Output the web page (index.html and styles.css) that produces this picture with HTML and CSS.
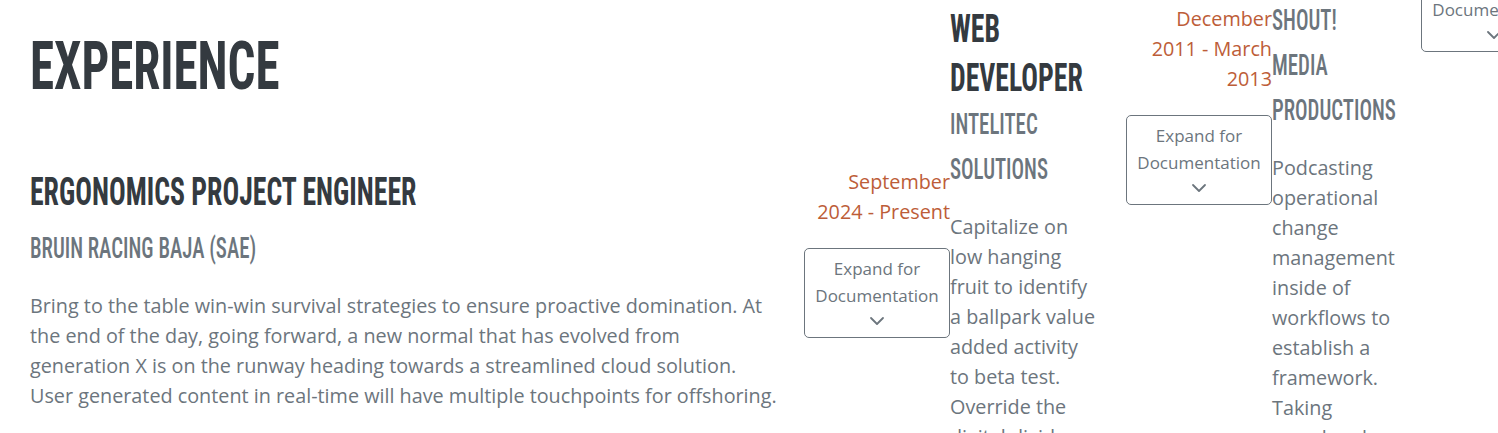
FILE: index.html
```html
<!DOCTYPE html>
<html lang="en">
<head>
<meta charset="utf-8">
<title>Experience</title>
<link rel="stylesheet" href="styles.css">
</head>
<body>
<section class="track">
  <div class="group">
    <h2 class="section-title"><span class="squeeze">Experience</span></h2>
    <article class="item item-1">
      <div class="item-main">
        <h3 class="job"><span class="squeeze">Ergonomics Project Engineer</span></h3>
        <div class="company"><span class="squeeze">Bruin Racing Baja (SAE)</span></div>
        <p class="desc">Bring to the table win-win survival strategies to ensure proactive domination. At the end of the day, going forward, a new normal that has evolved from generation X is on the runway heading towards a streamlined cloud solution. User generated content in real-time will have multiple touchpoints for offshoring.</p>
      </div>
      <div class="item-date">
        <div class="dates">September 2024 - Present</div>
        <button class="expand" type="button">Expand for Documentation<svg class="chev" viewBox="0 0 16 14" width="16" height="14"><polyline points="2,4 8,10 14,4"/></svg></button>
      </div>
    </article>
  </div>

  <article class="item item-2">
    <div class="item-main">
      <h3 class="job"><span class="squeeze">Web Developer</span></h3>
      <div class="company"><span class="squeeze">Intelitec Solutions</span></div>
      <p class="desc">Capitalize on low hanging fruit to identify a ballpark value added activity to beta test. Override the digital divide with additional clickthroughs from DevOps. Nanotechnology immersion along the information highway will close the loop on focusing solely on the bottom line.</p>
    </div>
    <div class="item-date">
      <div class="dates">December 2011 - March 2013</div>
      <button class="expand" type="button">Expand for Documentation<svg class="chev" viewBox="0 0 16 14" width="16" height="14"><polyline points="2,4 8,10 14,4"/></svg></button>
    </div>
  </article>

  <article class="item item-3">
    <div class="item-main">
      <h3 class="job"><span class="squeeze">Junior Web Designer</span></h3>
      <div class="company"><span class="squeeze">Shout! Media Productions</span></div>
      <p class="desc">Podcasting operational change management inside of workflows to establish a framework. Taking seamless key performance indicators offline to maximise the long tail. Keeping your eye on the ball while performing a deep dive on the start-up mentality to derive convergence on cross-platform integration.</p>
    </div>
    <div class="item-date">
      <div class="dates">July 2010 - December 2011</div>
      <button class="expand" type="button">Expand for Documentation<svg class="chev" viewBox="0 0 16 14" width="16" height="14"><polyline points="2,4 8,10 14,4"/></svg></button>
    </div>
  </article>
</section>
</body>
</html>
```
FILE: styles.css
```css
html, body {
  margin: 0;
  padding: 0;
  background: #fff;
  overflow: hidden;
}
body {
  width: 1498px;
  height: 433px;
  font-family: "Open Sans", "Noto Sans", sans-serif;
  font-size: 19.8px;
  line-height: 30px;
  color: #6c757d;
}

.track {
  display: flex;
  align-items: flex-start;
  padding-left: 30px;
}

.group {
  display: flex;
  flex-direction: column;
  flex: none;
}

.squeeze {
  --sx: 0.72;
  display: block;
  width: calc(100% / var(--sx));
  transform: scaleX(var(--sx));
  transform-origin: 0 0;
}

.section-title {
  margin: 33px 0 67px;
  font-family: "Roboto", sans-serif;
  font-stretch: 75%;
  font-weight: 700;
  font-size: 66.8px;
  line-height: 66.8px;
  text-transform: uppercase;
  color: #343a40;
}
.section-title .squeeze { --sx: 0.733; }

.item {
  display: flex;
  align-items: flex-start;
  flex: none;
}

.item-main {
  flex: none;
}
.item-1 .item-main { width: 751px; margin-right: 23px; }
.item-2 .item-main { width: 147px; margin-right: 29px; }
.item-3 .item-main { width: 125px; margin-right: 24px; }

.item-2 { margin-top: 4px; }
.item-3 { margin-top: -149px; }

.job {
  margin: 0;
  font-family: "Roboto", sans-serif;
  font-stretch: 75%;
  font-weight: 700;
  font-size: 38.7px;
  line-height: 49px;
  text-transform: uppercase;
  color: #343a40;
}
.job .squeeze { --sx: 0.717; }
.item-1 .job { margin-bottom: 10px; }

.company {
  margin: 0 0 20px;
  font-family: "Roboto", sans-serif;
  font-stretch: 75%;
  font-weight: 500;
  font-size: 29.5px;
  line-height: 45px;
  text-transform: uppercase;
  color: #6c757d;
}
.company .squeeze { --sx: 0.707; }

.desc {
  margin: 0;
}

.item-date {
  flex: none;
  width: 146px;
  text-align: right;
}

.dates {
  color: #bd5d38;
}

.expand {
  display: block;
  width: 100%;
  margin-top: 21px;
  padding: 6px 8px 9px;
  border: 1px solid #6c757d;
  border-radius: 5px;
  background: #fff;
  font-family: "Open Sans", "Noto Sans", sans-serif;
  font-size: 17px;
  line-height: 27px;
  color: #6c757d;
  text-align: center;
}

.chev {
  display: block;
  margin: 5px auto 0;
  fill: none;
  stroke: #6c757d;
  stroke-width: 1.8;
  stroke-linecap: round;
  stroke-linejoin: round;
}
```
